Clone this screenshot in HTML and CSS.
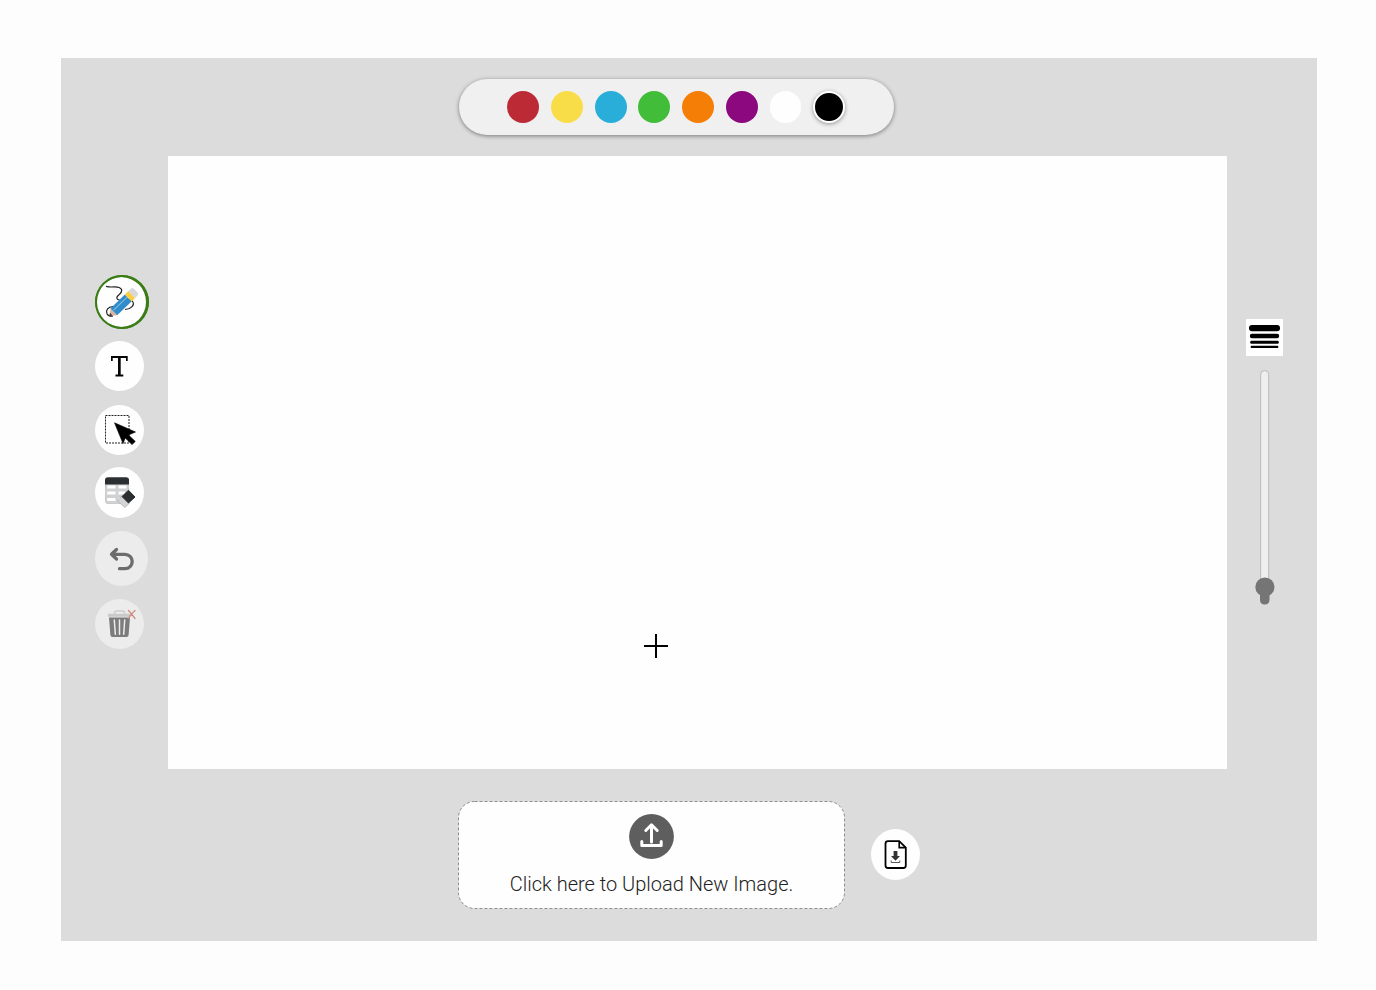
FILE: index.html
```
<!DOCTYPE html>
<html lang="en">
<head>
<meta charset="utf-8">
<title>Drawing board</title>
<link rel="stylesheet" href="styles.css">
</head>
<body>
<main class="app">
  <header class="top">
    <div class="palette">
      <button class="swatch red" aria-label="Red"></button>
      <button class="swatch yellow" aria-label="Yellow"></button>
      <button class="swatch blue" aria-label="Blue"></button>
      <button class="swatch green" aria-label="Green"></button>
      <button class="swatch orange" aria-label="Orange"></button>
      <button class="swatch purple" aria-label="Purple"></button>
      <button class="swatch white" aria-label="White"></button>
      <button class="swatch black" aria-label="Black"></button>
    </div>
  </header>

  <nav class="tools">
    <button class="tool pencil" aria-label="Draw">
      <svg width="54" height="54" viewBox="0 0 54 54">
        <path d="M11 11.300C17 13 20 11 24 12.500C28 14 27 17 24.500 19.300C21 22 21 24 24 25C28 26 34 23 37.300 26C40.500 30 36 34 30 34.500M18 31.500C13 32 10.500 35 12 38.700C13 41 15 41.500 18 41" fill="none" stroke="#222" stroke-width="1.200"/>
        <g transform="translate(14.500 41) rotate(-44)">
          <path d="M0 0L6-4.800V4.800Z" fill="#dcb49c"/>
          <path d="M0 0L2.500-2V2Z" fill="#333"/>
          <path d="M6-4.800H26V4.800H6Z" fill="#338cca"/>
          <path d="M7-1.300H26" stroke="#87c2e8" stroke-width="1"/>
          <path d="M26-4.800H31V4.800H26Z" fill="#f9cf45"/>
          <path d="M31-4.800H34Q36.500-4.800 36.500-2.300V2.300Q36.500 4.800 34 4.800H31Z" fill="#d6d8dc"/>
        </g>
      </svg>
    </button>
    <button class="tool text" aria-label="Text">
      <svg width="49" height="50" viewBox="0 0 49 50">
        <path d="M16 15H32.700V20H31V16.900H25.700V33.600H28.300V35.400H20.500V33.600H23V16.900H17.700V20H16Z" fill="#050508"/>
      </svg>
    </button>
    <button class="tool select" aria-label="Select">
      <svg width="49" height="50" viewBox="0 0 49 50">
        <rect x="10.500" y="10.500" width="23.500" height="27.500" fill="none" stroke="#222" stroke-width="1" stroke-dasharray="2 1"/>
        <path d="M19.500 17.800L40.500 27L33.500 30L40.300 36.400L37 39.600L30.300 33L28 38.500Z" fill="#000" stroke="#000" stroke-width=".6" stroke-linejoin="round"/>
      </svg>
    </button>
    <button class="tool erase" aria-label="Clear table">
      <svg width="49" height="51" viewBox="0 0 49 51">
        <rect x="10.500" y="15" width="23" height="21.500" rx="2" fill="#d0d1d2" stroke="#b9babb" stroke-width=".6"/>
        <path d="M12.300 18.500H20.500V21.500H12.300ZM23.500 18.500H31.500V21.500H23.500ZM12.300 24.500H20.500V27.500H12.300ZM23.500 24.500H30V27.500H23.500ZM12.300 31H20.500V34H12.300ZM23.500 31H26V34H23.500Z" fill="#fff"/>
        <path d="M10 17.500V13Q10 10.200 13 10.200H31Q34 10.200 34 13V17.500Z" fill="#2b2f32"/>
        <path d="M27 29L34 36.500L30 40.500L22.500 34Z" fill="#d3d4d5" stroke="#aaa" stroke-width=".7" stroke-linejoin="round"/>
        <path d="M33.500 23.300L40 30L33.500 36L27 29.500Z" fill="#2b2f32" stroke="#2b2f32" stroke-width="1" stroke-linejoin="round"/>
      </svg>
    </button>
    <button class="tool undo" aria-label="Undo">
      <svg width="53" height="55" viewBox="0 0 53 55">
        <path d="M21.500 18.500L16.500 23.300L21.500 28M17.500 23.300H30A7.200 7.200 0 0 1 30 37.700H24.500" fill="none" stroke="#6c6c6c" stroke-width="3.300" stroke-linecap="round" stroke-linejoin="round"/>
      </svg>
    </button>
    <button class="tool trash" aria-label="Delete">
      <svg width="49" height="50" viewBox="0 0 49 50">
        <path d="M19.500 15V14Q19.500 12 21.500 12H27.500Q29.500 12 29.500 14V15" fill="none" stroke="#ccc" stroke-width="1.500"/>
        <rect x="12.800" y="14.700" width="23" height="3" rx="1" fill="#c9c9c9"/>
        <path d="M14 18.500H35L33.600 36Q33.500 38 31.500 38H17.500Q15.500 38 15.400 36Z" fill="#7c7c7c"/>
        <path d="M19.300 21L20.300 35.300M24.500 21V35.300M29.700 21L28.700 35.300" stroke="#ececec" stroke-width="1.500" stroke-linecap="round"/>
        <path d="M33.500 11.500Q36 14 40 19.500M40 11.500Q36.500 14.500 33.200 19.500" fill="none" stroke="#cf8e7d" stroke-width="1.300" stroke-linecap="round"/>
      </svg>
    </button>
  </nav>

  <section class="canvas">
    <svg class="cursor" width="24" height="24" viewBox="0 0 24 24"><path d="M12 0V24M0 12H24" stroke="#000" stroke-width="2"/></svg>
  </section>

  <aside class="stroke">
    <svg class="widths" width="37" height="37" viewBox="0 0 37 37">
      <rect width="37" height="37" fill="#fff"/>
      <rect x="3" y="6" width="31" height="6.200" rx="3"/>
      <rect x="3.800" y="14.700" width="29.400" height="4.600" rx="2.200"/>
      <rect x="4.200" y="21.800" width="28.600" height="2.900" rx="1.300"/>
      <rect x="4.600" y="26.700" width="27.800" height="2.200" rx="1"/>
    </svg>
    <svg class="slider" width="22" height="237" viewBox="0 0 22 237">
      <rect x="6.700" y="1.500" width="8" height="232" rx="4" fill="#efefef" stroke="#b9b9b9"/>
      <circle cx="10.900" cy="218" r="9.600" fill="#757575"/>
      <path d="M6 221H15.500V230.500Q15.500 235.500 10.700 235.500Q6 235.500 6 230.500Z" fill="#757575"/>
    </svg>
  </aside>

  <footer class="bottom">
    <label class="upload">
      <svg class="border" width="387" height="108" viewBox="0 0 387 108"><rect x=".5" y=".5" width="386" height="107" rx="16" fill="#fefefe" stroke="#8e8e8e" stroke-dasharray="3 2"/></svg>
      <svg class="arrow" width="45" height="45" viewBox="0 0 45 45">
        <circle cx="22.500" cy="22.500" r="22.400" fill="#5e5e5e"/>
        <path d="M22.500 28V11M16.800 16.500L22.500 10.800L28.200 16.500" fill="none" stroke="#fff" stroke-width="3" stroke-linecap="round" stroke-linejoin="round"/>
        <path d="M12.800 27.500V31.500H32.200V27.500" fill="none" stroke="#fff" stroke-width="3" stroke-linecap="round" stroke-linejoin="round"/>
      </svg>
      <span class="caption">Click here to Upload New Image.</span>
    </label>
    <button class="tool download" aria-label="Download">
      <svg width="49" height="51" viewBox="0 0 49 51">
        <path d="M17 12.200H28.200L34.800 18.600V36.500Q34.800 39 32.300 39H17Q14.500 39 14.500 36.500V14.700Q14.500 12.200 17 12.200Z" fill="#fff" stroke="#000" stroke-width="1.800"/>
        <path d="M28.200 12.500V18.600H34.500" fill="none" stroke="#000" stroke-width="1.600"/>
        <path d="M22.600 22H26.400V27H29L24.500 31.700L20 27H22.600Z" fill="#303338"/>
        <path d="M20.200 31.500V33.500H28.800V31.500" fill="none" stroke="#555" stroke-width="1"/>
      </svg>
    </button>
  </footer>
</main>
</body>
</html>
```
FILE: styles.css
```
* { box-sizing: border-box; }

body {
  margin: 0;
  padding: 58px 59px 49px 61px;
  background: #fdfdfd;
  font-family: Roboto, sans-serif;
}

button { padding: 0; border: 0; }
svg { display: block; flex: none; }

.app {
  display: grid;
  grid-template-columns: 107px 1059px 90px;
  grid-template-rows: 98px 613px 172px;
  width: 1256px;
  height: 883px;
  background: #dcdcdc;
}

.top {
  grid-column: 1 / -1;
  padding: 21px 0 0 398px;
}

.palette {
  display: flex;
  align-items: center;
  gap: 11.8px;
  width: 435px;
  height: 56px;
  padding-left: 48.4px;
  border-radius: 28px;
  background: #f0f0f0;
  box-shadow: 0 1px 4px rgba(0, 0, 0, .45);
}

.swatch {
  width: 31.9px;
  height: 32px;
  border-radius: 50%;
}

.red { background: #bc2a36; }
.yellow { background: #f9dd48; }
.blue { background: #29aed9; }
.green { background: #41bd39; }
.orange { background: #f47e06; }
.purple { background: #8b087e; }
.white { background: #fefefe; }
.black {
  border: 2px solid #fff;
  background: #000;
  box-shadow: 0 1px 4px rgba(0, 0, 0, .4);
}

.tools {
  display: flex;
  flex-direction: column;
  align-items: flex-start;
  gap: 13px;
  padding: 119px 0 0 34px;
}

.tool {
  flex: none;
  border-radius: 50%;
  background: #fefefe;
}

.pencil {
  margin-bottom: -1px;
  box-shadow: inset -1px 0 0 2px #3a7d17, inset 0 0 0 2px #3a7d17;
}

.select { margin: 1px 0 -1px; }
.undo, .trash { background: #ececec; }

.canvas {
  padding: 478px 0 0 476px;
  background: #fefefe;
}

.stroke {
  display: flex;
  flex-direction: column;
  align-items: center;
  gap: 13px;
  padding: 163px 15px 0 0;
}

.bottom {
  grid-column: 1 / -1;
  display: flex;
  align-items: flex-start;
  gap: 25.5px;
  padding: 32px 0 0 397px;
}

.upload {
  position: relative;
  display: flex;
  flex-direction: column;
  align-items: center;
  width: 387px;
  height: 108px;
  padding-top: 13px;
}

.border {
  position: absolute;
  inset: 0;
}

.arrow { position: relative; }

.caption {
  position: relative;
  margin-top: 13px;
  font-size: 20px;
  font-weight: 300;
  line-height: 24px;
  color: #222;
  white-space: nowrap;
}

.download { margin-top: 28px; }
```
